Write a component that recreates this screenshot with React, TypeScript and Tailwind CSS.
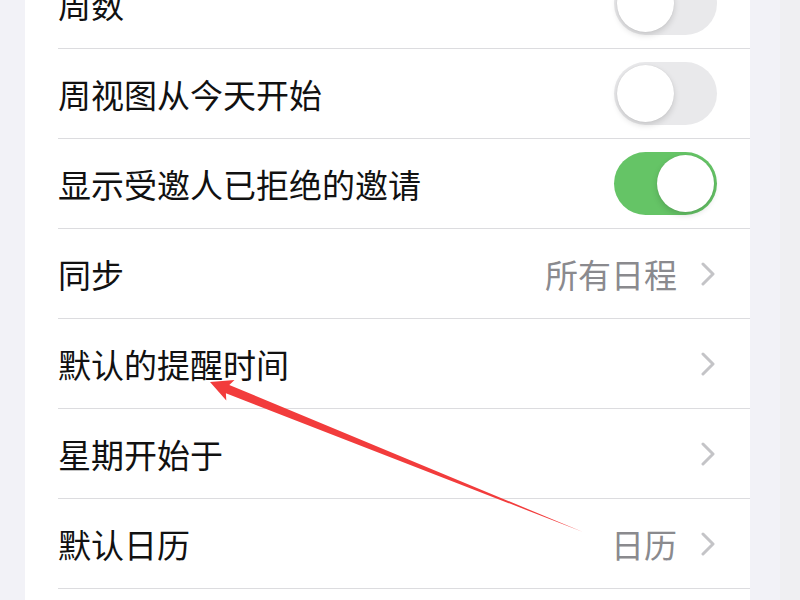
import React from "react";

type Row =
  | { label: string; kind: "toggle"; on: boolean }
  | { label: string; kind: "link"; value?: string };

const rows: Row[] = [
  { label: "周数", kind: "toggle", on: false },
  { label: "周视图从今天开始", kind: "toggle", on: false },
  { label: "显示受邀人已拒绝的邀请", kind: "toggle", on: true },
  { label: "同步", kind: "link", value: "所有日程" },
  { label: "默认的提醒时间", kind: "link" },
  { label: "星期开始于", kind: "link" },
  { label: "默认日历", kind: "link", value: "日历" },
  { label: "", kind: "link" },
];

function Toggle({ on }: { on: boolean }) {
  return (
    <div
      className={`relative h-[63px] w-[103px] shrink-0 rounded-full ${
        on ? "bg-[#65c466]" : "bg-[#e9e9eb]"
      }`}
    >
      <div
        className={`absolute top-[3px] h-[57px] w-[57px] rounded-full bg-white shadow-[0_3px_6px_rgba(0,0,0,0.15),0_0_1px_rgba(0,0,0,0.12)] ${
          on ? "right-[3px]" : "left-[3px]"
        }`}
      />
    </div>
  );
}

function Chevron() {
  return (
    <svg width="14" height="24" viewBox="0 0 14 24" className="shrink-0">
      <polyline
        points="2,2 12,12 2,22"
        fill="none"
        stroke="#c4c4c7"
        strokeWidth="3"
        strokeLinecap="round"
        strokeLinejoin="round"
      />
    </svg>
  );
}

export default function App() {
  return (
    <div
      className="relative h-[600px] w-[800px] overflow-hidden bg-[#f2f2f7]"
      style={{ fontFamily: '"Noto Sans CJK SC", "Noto Sans", sans-serif' }}
    >
      <div className="flex h-full">
        <div className="w-[25px] shrink-0" />
        <div className="w-[725px] shrink-0 bg-white">
          <div className="-mt-[41px] flex flex-col">
            {rows.map((r, i) => (
              <div key={i} className="h-[90px] pl-[33px]">
                <div className="flex h-full items-center justify-between border-b border-[#dcdcdf] pr-[33px]">
                  <span className="pt-[1px] text-[33px] leading-none text-[#111111]">
                    {r.label}
                  </span>
                  {r.kind === "toggle" ? (
                    <Toggle on={r.on} />
                  ) : (
                    <div className="flex items-center gap-[24px] pr-[2px]">
                      {r.value && (
                        <span className="pt-[1px] text-[33px] leading-none text-[#8a8a8e]">
                          {r.value}
                        </span>
                      )}
                      {r.label && <Chevron />}
                    </div>
                  )}
                </div>
              </div>
            ))}
          </div>
        </div>
        <div className="w-[30px] shrink-0 bg-[#f2f2f7]" />
        <div className="flex-1 bg-[#efeff2]" />
      </div>
      <svg
        className="pointer-events-none absolute left-0 top-0"
        width="800"
        height="600"
        viewBox="0 0 800 600"
      >
        <polygon
          points="210,382 234.5,380 229.3,384.9 583,532 225.9,393.3 226.3,400.4"
          fill="#f23c3c"
        />
      </svg>
    </div>
  );
}
